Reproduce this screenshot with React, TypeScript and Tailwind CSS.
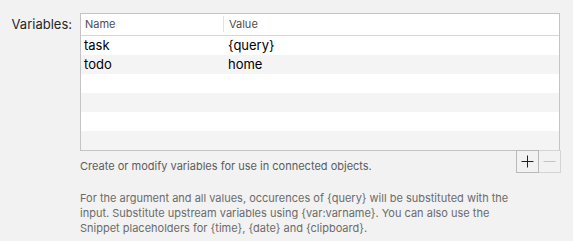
export default function App() {
  const rows = [
    { name: "task", value: "{query}" },
    { name: "todo", value: "home" },
    { name: "", value: "" },
    { name: "", value: "" },
    { name: "", value: "" },
    { name: "", value: "" },
  ];

  return (
    <div
      className="w-[573px] h-[241px] bg-[#f2f2f2] flex pt-[13px] overflow-hidden"
      style={{ fontFamily: 'Inter, "Liberation Sans", Arial, sans-serif' }}
    >
      {/* Label */}
      <div className="w-[80px] pr-[8px] text-right text-[13px] text-[#262626] leading-[20px] pt-[1px]">
        Variables:
      </div>

      {/* Content */}
      <div className="w-[480px] flex flex-col">
        <div className="border border-[#c4c4c4] bg-white">
          {/* Header */}
          <div className="h-[22px] flex items-center border-b border-[#d6d6d6] text-[11px] text-[#4d4d4d]">
            <div className="w-[143px] pl-[4px] flex items-center h-full relative">
              Name
              <span className="absolute right-0 top-[2px] bottom-[3px] w-px bg-[#e3e3e3]" />
            </div>
            <div className="pl-[5px]">Value</div>
          </div>
          {/* Rows */}
          {rows.map((row, i) => (
            <div
              key={i}
              className={`h-[19px] flex items-center text-[13px] text-black ${
                i % 2 === 0 ? "bg-white" : "bg-[#f4f4f4]"
              }`}
            >
              <div className="w-[143px] pl-[3px]">{row.name}</div>
              <div className="pl-[4px]">{row.value}</div>
            </div>
          ))}
        </div>

        {/* Footer row */}
        <div className="flex justify-between -mt-px">
          <div className="text-[11px] text-[#5c5c5c] pt-[9px] leading-[14px]">
            Create or modify variables for use in connected objects.
          </div>
          <div className="flex mr-[-1px]">
            <button className="w-[23px] h-[23px] border border-[#b9b9b9] flex items-center justify-center bg-[#f2f2f2]">
              <svg width="13" height="13" viewBox="0 0 13 13">
                <path d="M6.5 0.5v12M0.5 6.5h12" stroke="#222" strokeWidth="1" />
              </svg>
            </button>
            <button className="w-[22px] h-[23px] border border-l-0 border-[#d4d4d4] flex items-center justify-center bg-[#f2f2f2]">
              <svg width="13" height="13" viewBox="0 0 13 13">
                <path d="M0.5 6.5h12" stroke="#c4c4c4" strokeWidth="1" />
              </svg>
            </button>
          </div>
        </div>

        {/* Description */}
        <p className="mt-[18px] text-[11px] leading-[15px] text-[#6b6b6b] whitespace-nowrap">
          For the argument and all values, occurences of {"{query}"} will be substituted with the
          <br />
          input. Substitute upstream variables using {"{var:varname}"}. You can also use the
          <br />
          Snippet placeholders for {"{time}"}, {"{date}"} and {"{clipboard}"}.
        </p>
      </div>
    </div>
  );
}
